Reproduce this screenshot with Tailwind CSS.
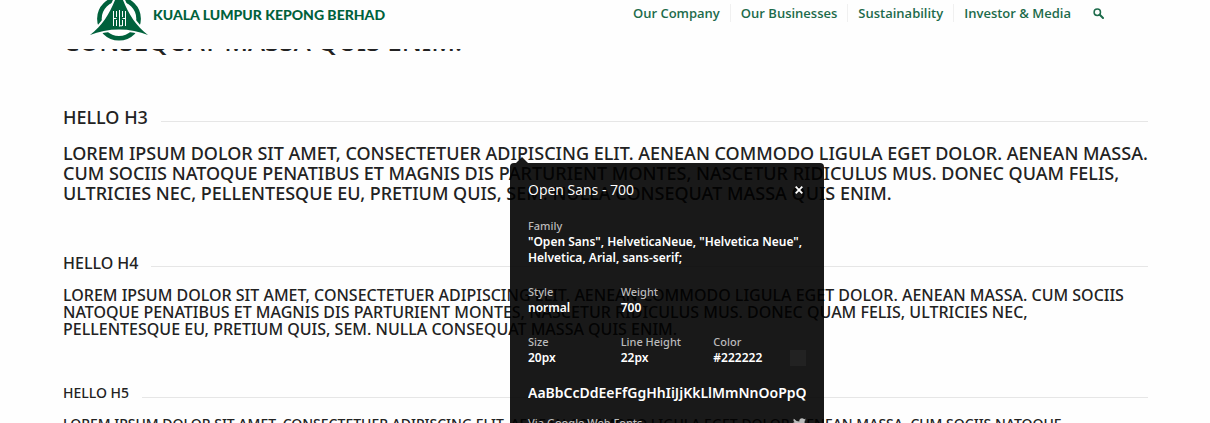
<!DOCTYPE html>
<html lang="en">
<head>
<meta charset="utf-8">
<title>Kuala Lumpur Kepong Berhad</title>
<script src="https://cdn.jsdelivr.net/npm/@tailwindcss/browser@4"></script>
</head>
<body class="h-screen overflow-hidden bg-[#fefefe] font-['Noto_Sans','Open_Sans',sans-serif] text-[#222222]">
<header class="relative z-10 flex h-[49px] items-start justify-between bg-[#fefefe] pr-[106px] pl-[90px] font-['Open_Sans',sans-serif]">
  <a href="#" class="flex items-start gap-[5px] text-[#00613c]">
    <svg class="h-[42px] w-[58px]" viewBox="0 0 58 42" fill="none" aria-hidden="true">
      <circle cx="29" cy="18.7" r="19.6" stroke="currentColor" stroke-width="4.6"/>
      <path d="M29 -12C34 6 43 24 58 35C41 27.5 17 27.5 0 35C15 24 24 6 29 -12Z" fill="currentColor" stroke="#fefefe" stroke-width="4"/>
      <path d="M29 -12C34 6 43 24 58 35C41 27.5 17 27.5 0 35C15 24 24 6 29 -12Z" fill="currentColor"/>
      <path d="M23.500 11v15M26.500 11v6M26.500 20v6M23.500 18.500h3M29.500 10v16.500M29.500 25.800h2.500M35.500 11v15M32.500 11v6M32.500 20v6M32.500 18.500h3" stroke="#fefefe" stroke-width="1"/>
    </svg>
    <span class="pt-[6px] font-['Lato',sans-serif] text-[14px] leading-[18px] font-black whitespace-nowrap">KUALA LUMPUR KEPONG BERHAD</span>
  </a>
  <nav class="flex items-center pt-[4px] text-[13px] leading-[18px] font-semibold whitespace-nowrap text-[#1d6b4b]">
    <a href="#" class="border-r border-[#f0f0f0] pr-[10px]">Our Company</a>
    <a href="#" class="border-r border-[#f0f0f0] px-[10px]">Our Businesses</a>
    <a href="#" class="border-r border-[#f0f0f0] px-[10px]">Sustainability</a>
    <a href="#" class="px-[10px]">Investor &amp; Media</a>
    <button type="button" aria-label="Search" class="ml-[12px]">
      <svg class="size-[11px]" viewBox="0 0 11 11" fill="none" stroke="currentColor" aria-hidden="true"><circle cx="4.3" cy="4.3" r="3.2" stroke-width="1.5"/><path d="M6.8 6.8L10 10" stroke-width="2" stroke-linecap="round"/></svg>
    </button>
  </nav>
</header>
<main class="-mt-[26px] pr-[62px] pl-[63px] font-medium whitespace-nowrap">
  <p class="text-[26px] leading-[36px]">CONSEQUAT MASSA QUIS ENIM.</p>

  <section class="pt-[47px]">
    <h3 class="flex items-center gap-[13px] text-[18px] leading-[22px]">HELLO H3<span class="mt-[9px] h-px flex-1 bg-[#e6e6e6]"></span></h3>
    <div class="relative mt-[15px]">
      <p class="text-[18px] leading-[20px]">LOREM IPSUM DOLOR SIT AMET, CONSECTETUER ADIPISCING ELIT. AENEAN COMMODO LIGULA EGET DOLOR. AENEAN MASSA.<br>CUM SOCIIS NATOQUE PENATIBUS ET MAGNIS DIS PARTURIENT MONTES, NASCETUR RIDICULUS MUS. DONEC QUAM FELIS,<br>ULTRICIES NEC, PELLENTESQUE EU, PRETIUM QUIS, SEM. NULLA CONSEQUAT MASSA QUIS ENIM.</p>

      <aside class="absolute top-[14px] left-[447px] z-20 w-[314px] text-white">
        <svg class="ml-[6px] block h-[6px] w-[12px]" viewBox="0 0 12 6" aria-hidden="true"><path d="M0 6L6 0L12 6Z" fill="#000" fill-opacity=".9"/></svg>
        <div class="rounded-t-[4px] bg-black/90 px-[18px] pt-[17px] pb-[18px] text-[12px] leading-[16px] font-semibold">
          <div class="flex items-center justify-between font-['Open_Sans',sans-serif] text-[14px] leading-[20px] font-normal">
            <span>Open Sans - 700</span>
            <button type="button" aria-label="Close" class="mr-[3px]"><svg class="size-[8px]" viewBox="0 0 8 8" fill="none" stroke="#fff" stroke-width="1.8" aria-hidden="true"><path d="M.7 .7L7.3 7.3M7.3 .7L.7 7.3"/></svg></button>
          </div>
          <dl class="mt-[18px]">
            <dt class="text-[11px] font-medium text-[#bbbbbb]">Family</dt>
            <dd>"Open Sans", HelveticaNeue, "Helvetica Neue",<br>Helvetica, Arial, sans-serif;</dd>
          </dl>
          <dl class="mt-[18px] grid grid-cols-3">
            <div><dt class="text-[11px] font-medium text-[#bbbbbb]">Style</dt><dd>normal</dd></div>
            <div><dt class="text-[11px] font-medium text-[#bbbbbb]">Weight</dt><dd>700</dd></div>
          </dl>
          <dl class="mt-[18px] grid grid-cols-3">
            <div><dt class="text-[11px] font-medium text-[#bbbbbb]">Size</dt><dd>20px</dd></div>
            <div><dt class="text-[11px] font-medium text-[#bbbbbb]">Line Height</dt><dd>22px</dd></div>
            <div><dt class="text-[11px] font-medium text-[#bbbbbb]">Color</dt><dd class="flex items-center justify-between">#222222<span class="size-[16px] bg-[#222222]"></span></dd></div>
          </dl>
          <p class="mt-[17px] overflow-hidden text-[14px] leading-[20px]">AaBbCcDdEeFfGgHhIiJjKkLlMmNnOoPpQqRrSsTtUuVvWwXxYyZz</p>
          <div class="mt-[12px] flex items-center justify-between text-[11px] font-medium text-[#bbbbbb]">
            <span>Via Google Web Fonts</span>
            <svg class="size-[13px]" viewBox="0 0 24 24" fill="currentColor" aria-hidden="true"><path d="M24 4.6a10 10 0 0 1-2.8.8 5 5 0 0 0 2.1-2.7 10 10 0 0 1-3.1 1.2 4.9 4.9 0 0 0-8.4 4.5A14 14 0 0 1 1.7 3.1a4.9 4.9 0 0 0 1.5 6.6 5 5 0 0 1-2.2-.6v.1a4.9 4.9 0 0 0 4 4.8 5 5 0 0 1-2.3.1 4.9 4.9 0 0 0 4.6 3.4A10 10 0 0 1 0 19.5 14 14 0 0 0 21.5 7.1 10 10 0 0 0 24 4.6z"/></svg>
          </div>
        </div>
      </aside>
    </div>
  </section>

  <section class="pt-[49px]">
    <h4 class="flex items-center gap-[13px] text-[16px] leading-[22px]">HELLO H4<span class="mt-[7px] h-px flex-1 bg-[#e6e6e6]"></span></h4>
    <p class="mt-[13px] text-[16px] leading-[17px]">LOREM IPSUM DOLOR SIT AMET, CONSECTETUER ADIPISCING ELIT. AENEAN COMMODO LIGULA EGET DOLOR. AENEAN MASSA. CUM SOCIIS<br>NATOQUE PENATIBUS ET MAGNIS DIS PARTURIENT MONTES, NASCETUR RIDICULUS MUS. DONEC QUAM FELIS, ULTRICIES NEC,<br>PELLENTESQUE EU, PRETIUM QUIS, SEM. NULLA CONSEQUAT MASSA QUIS ENIM.</p>
  </section>

  <section class="pt-[44px]">
    <h5 class="flex items-center gap-[13px] text-[14px] leading-[22px]">HELLO H5<span class="mt-[9px] h-px flex-1 bg-[#e6e6e6]"></span></h5>
    <p class="mt-[12px] text-[14px] leading-[16px]">LOREM IPSUM DOLOR SIT AMET, CONSECTETUER ADIPISCING ELIT. AENEAN COMMODO LIGULA EGET DOLOR. AENEAN MASSA. CUM SOCIIS NATOQUE</p>
  </section>
</main>
</body>
</html>
